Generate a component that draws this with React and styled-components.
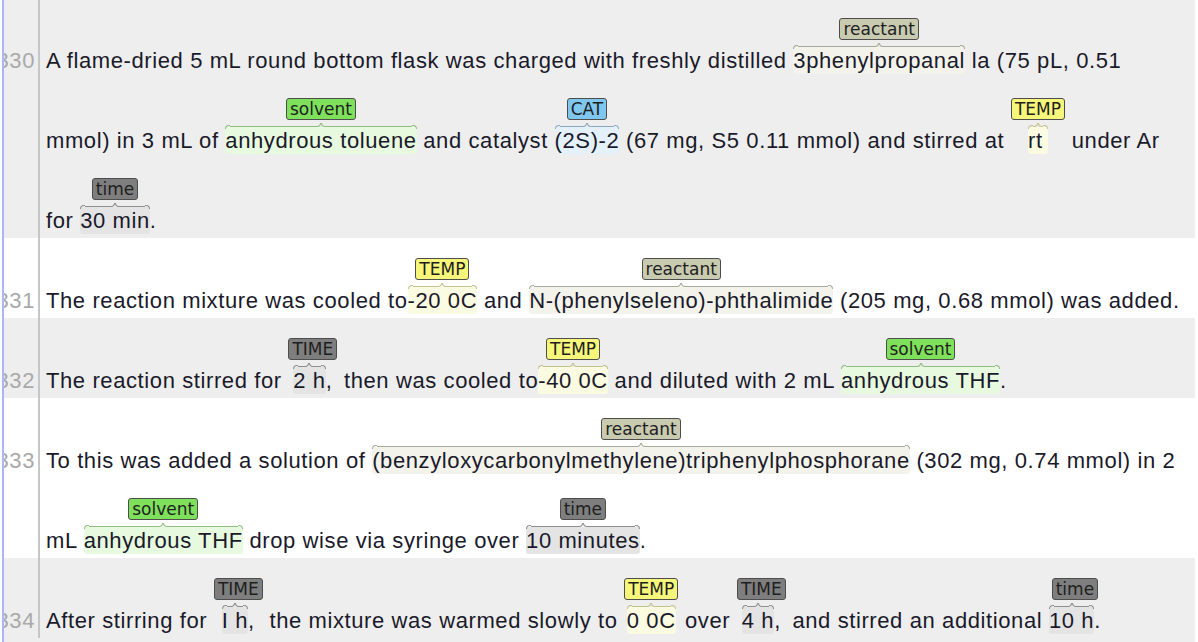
import React from 'react'
import styled, { createGlobalStyle } from 'styled-components'

const kinds = {
  reactant: { label: '#c9cbb1', mark: '#f3f3ec', brace: '#a9aa96' },
  solvent: { label: '#7fe05c', mark: '#e7f9df', brace: '#8fbd7f' },
  cat: { label: '#7fc7ef', mark: '#e4f1fb', brace: '#8aa9c0' },
  temp: { label: '#f6f67a', mark: '#fbfbe2', brace: '#c4c28c' },
  time: { label: '#7e7e7e', mark: '#e4e4e4', brace: '#8e8e8e' },
}

const Global = createGlobalStyle`
  html, body {
    margin: 0;
    background: #fff;
    font-family: "Liberation Sans", Arial, sans-serif;
  }
`

const Doc = styled.div`
  margin: -2px 3px 0 2px;
  border-left: 2px solid #abb7f4;
`

const Row = styled.div`
  display: grid;
  grid-template-columns: 36px 1fr;
  background: ${p => (p.$shade ? '#eeeeee' : '#ffffff')};
  &:last-child {
    padding-bottom: 8px;
  }
`

const Gutter = styled.div`
  border-right: 2px solid #c6c6c6;
  overflow: hidden;
`

const Num = styled.div`
  height: 80px;
  box-sizing: border-box;
  display: flex;
  align-items: flex-end;
  justify-content: flex-end;
  padding: 0 3px 4px 0;
  font-size: 22px;
  line-height: 26px;
  letter-spacing: 0.6px;
  color: #a9a9a9;
  white-space: nowrap;
`

const Body = styled.div`
  padding-left: 6px;
`

const Line = styled.div`
  height: 80px;
  box-sizing: border-box;
  display: flex;
  align-items: flex-end;
  padding-bottom: 4px;
`

const Text = styled.div`
  font-size: 22px;
  line-height: 26px;
  letter-spacing: 0.6px;
  color: #1a1a2a;
  white-space: pre;
`

const Chunk = styled.span`
  display: inline-flex;
  flex-direction: column;
  align-items: center;
  vertical-align: bottom;
`

const Label = styled.span`
  font-family: "DejaVu Sans", sans-serif;
  font-size: 17px;
  line-height: 20px;
  letter-spacing: 0;
  padding: 0 3px;
  border: 1px solid #4d4d4d;
  border-radius: 3px;
  background: ${p => kinds[p.$kind].label};
  color: #1e1e1e;
  margin-bottom: 3px;
`

const Target = styled.span`
  display: flex;
  align-items: flex-end;
`

const Covered = styled.span`
  display: flex;
  flex-direction: column;
`

const Brace = styled.span`
  position: relative;
  display: flex;
  height: 6px;
  margin-bottom: -2px;
  --c: ${p => kinds[p.$kind].brace};
`

const BraceEnd = styled.span`
  width: 5px;
  height: 4px;
  margin-top: 2px;
  box-sizing: border-box;
  border-top: 1px solid var(--c);
  border-${p => p.$side}: 1px solid var(--c);
  border-top-${p => p.$side}-radius: 5px;
`

const BraceRun = styled.span`
  flex: 1;
  height: 3px;
  border-bottom: 1px solid var(--c);
`

const BraceTip = styled.span`
  width: 4px;
  height: 3px;
  border-bottom: 1px solid var(--c);
  border-${p => p.$side}: 1px solid var(--c);
  border-bottom-${p => p.$side}-radius: 4px;
`

const Mark = styled.span`
  padding-top: 1px;
  border-radius: 3px;
  background: ${p => kinds[p.$kind].mark};
`

function Ann({ kind, label, text, after }) {
  return (
    <Chunk>
      <Label $kind={kind}>{label}</Label>
      <Target>
        <Covered>
          <Brace $kind={kind}>
            <BraceEnd $side="left" />
            <BraceRun />
            <BraceTip $side="right" />
            <BraceTip $side="left" />
            <BraceRun />
            <BraceEnd $side="right" />
          </Brace>
          <Mark $kind={kind}>{text}</Mark>
        </Covered>
        {after && <span>{after}</span>}
      </Target>
    </Chunk>
  )
}

const sentences = [
  {
    n: 330,
    shade: true,
    lines: [
      [
        'A flame-dried 5 mL round bottom flask was charged with freshly distilled ',
        { kind: 'reactant', label: 'reactant', text: '3phenylpropanal' },
        ' la (75 pL, 0.51',
      ],
      [
        'mmol) in 3 mL of ',
        { kind: 'solvent', label: 'solvent', text: 'anhydrous toluene' },
        ' and catalyst ',
        { kind: 'cat', label: 'CAT', text: '(2S)-2' },
        ' (67 mg, S5 0.11 mmol) and stirred at ',
        { kind: 'temp', label: 'TEMP', text: 'rt' },
        ' under Ar',
      ],
      ['for ', { kind: 'time', label: 'time', text: '30 min' }, '.'],
    ],
  },
  {
    n: 331,
    lines: [
      [
        'The reaction mixture was cooled to',
        { kind: 'temp', label: 'TEMP', text: '-20 0C' },
        ' and ',
        { kind: 'reactant', label: 'reactant', text: 'N-(phenylseleno)-phthalimide' },
        ' (205 mg, 0.68 mmol) was added.',
      ],
    ],
  },
  {
    n: 332,
    shade: true,
    lines: [
      [
        'The reaction stirred for ',
        { kind: 'time', label: 'TIME', text: '2 h', after: ',' },
        ' then was cooled to',
        { kind: 'temp', label: 'TEMP', text: '-40 0C' },
        ' and diluted with 2 mL ',
        { kind: 'solvent', label: 'solvent', text: 'anhydrous THF' },
        '.',
      ],
    ],
  },
  {
    n: 333,
    lines: [
      [
        'To this was added a solution of ',
        { kind: 'reactant', label: 'reactant', text: '(benzyloxycarbonylmethylene)triphenylphosphorane' },
        ' (302 mg, 0.74 mmol) in 2',
      ],
      [
        'mL ',
        { kind: 'solvent', label: 'solvent', text: 'anhydrous THF' },
        ' drop wise via syringe over ',
        { kind: 'time', label: 'time', text: '10 minutes' },
        '.',
      ],
    ],
  },
  {
    n: 334,
    shade: true,
    lines: [
      [
        'After stirring for ',
        { kind: 'time', label: 'TIME', text: 'I h', after: ',' },
        ' the mixture was warmed slowly to ',
        { kind: 'temp', label: 'TEMP', text: '0 0C' },
        ' over ',
        { kind: 'time', label: 'TIME', text: '4 h', after: ',' },
        ' and stirred an additional ',
        { kind: 'time', label: 'time', text: '10 h', after: '.' },
      ],
    ],
  },
]

export default function App() {
  return (
    <>
      <Global />
      <Doc>
        {sentences.map(s => (
          <Row key={s.n} $shade={s.shade}>
            <Gutter>
              <Num>{s.n}</Num>
            </Gutter>
            <Body>
              {s.lines.map((parts, i) => (
                <Line key={i}>
                  <Text>
                    {parts.map((p, j) =>
                      typeof p === 'string' ? p : <Ann key={j} {...p} />
                    )}
                  </Text>
                </Line>
              ))}
            </Body>
          </Row>
        ))}
      </Doc>
    </>
  )
}
